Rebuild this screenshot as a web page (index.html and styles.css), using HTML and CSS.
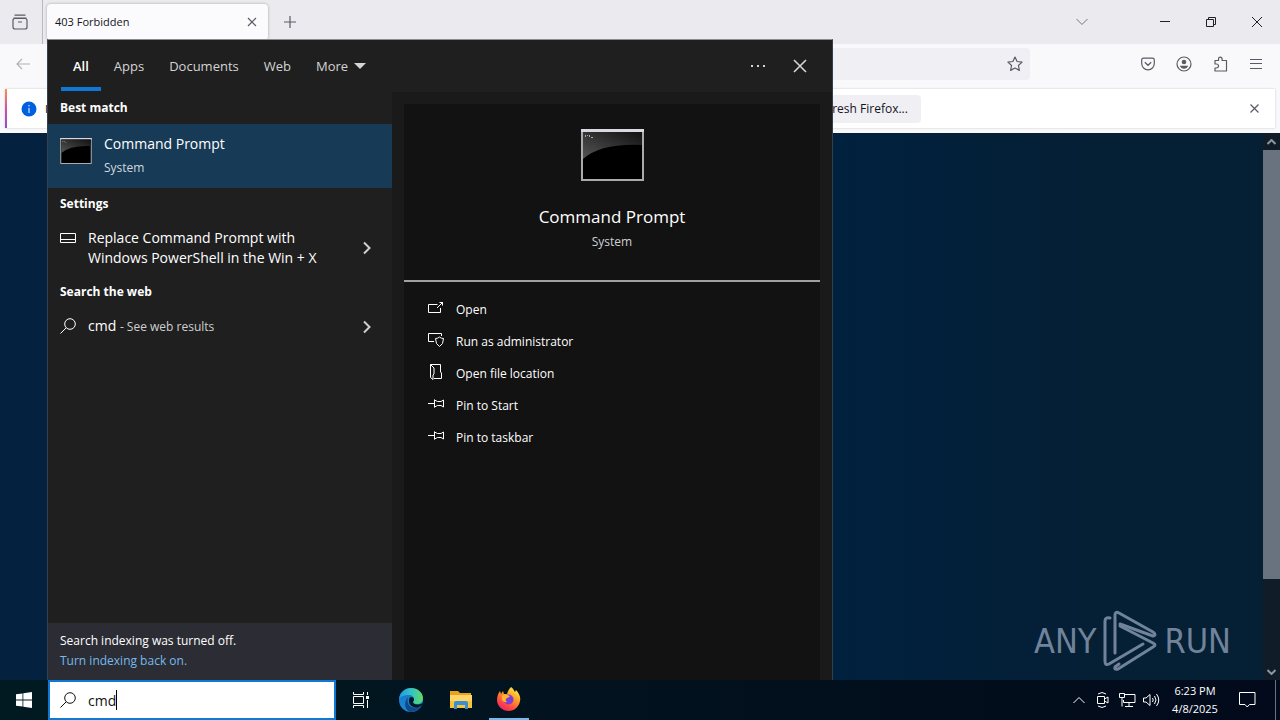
FILE: index.html
```html
<!DOCTYPE html>
<html lang="en">
<head>
    <meta charset="UTF-8">
    <meta name="viewport" content="width=device-width, initial-scale=1.0">
    <title>Desktop - Search</title>
    <link rel="stylesheet" href="styles.css">
</head>
<body>
    <main class="desktop">
        <!-- Browser window -->
        <section class="browser" aria-label="Firefox">
            <div class="tab-bar">
                <button class="icon-btn firefox-view" aria-label="Firefox View">
                    <svg width="18" height="18" viewBox="0 0 18 18"><path d="M3.5 2.2h11M2.5 5.2h13M2 7.5q0-2 2-2h10q2 0 2 2v6.500q0 2-2 2H4q-2 0-2-2zM7 9h4"/></svg>
                </button>
                <div class="browser-tab">
                    <span>403 Forbidden</span>
                    <button class="icon-btn tab-close" aria-label="Close tab">
                        <svg width="10" height="10" viewBox="0 0 10 10"><path d="M1 1l8 8M9 1l-8 8"/></svg>
                    </button>
                </div>
                <button class="icon-btn new-tab" aria-label="New tab">
                    <svg width="12" height="12" viewBox="0 0 12 12"><path d="M6 0v12M0 6h12"/></svg>
                </button>
                <div class="window-controls">
                    <button class="icon-btn list-tabs" aria-label="List all tabs">
                        <svg width="12" height="8" viewBox="0 0 12 8"><path d="M.5 1L6 6.500 11.500 1"/></svg>
                    </button>
                    <button class="icon-btn" aria-label="Minimize">
                        <svg width="10" height="10" viewBox="0 0 10 10"><path d="M0 4.500h10"/></svg>
                    </button>
                    <button class="icon-btn" aria-label="Restore">
                        <svg width="10" height="10" viewBox="0 0 10 10"><path d="M.5 2.500h7v7h-7zM2.500 2.500v-2h7v7h-2"/></svg>
                    </button>
                    <button class="icon-btn" aria-label="Close">
                        <svg width="10" height="10" viewBox="0 0 10 10"><path d="M0 0l10 10M10 0L0 10"/></svg>
                    </button>
                </div>
            </div>

            <div class="nav-bar">
                <button class="icon-btn back" aria-label="Back">
                    <svg width="14" height="12" viewBox="0 0 14 12"><path d="M14 6H1M6 1L1 6l5 5"/></svg>
                </button>
                <div class="url-bar">
                    <button class="icon-btn" aria-label="Bookmark this page">
                        <svg width="16" height="16" viewBox="0 0 16 16"><path stroke-linejoin="round" d="M8 1l2.100 4.500 5 .6-3.700 3.400 1 4.900L8 12l-4.400 2.400 1-4.900L.9 6.100l5-.6z"/></svg>
                    </button>
                </div>
                <div class="nav-tools">
                    <button class="icon-btn" aria-label="Save to Pocket">
                        <svg width="14" height="14" viewBox="0 0 14 14"><path d="M.7 3q0-1.800 1.800-1.800h9q1.800 0 1.800 1.800v3.500a6.300 6.300 0 0 1-12.600 0zM3.800 5.200L7 8.300l3.200-3.100"/></svg>
                    </button>
                    <button class="icon-btn" aria-label="Account">
                        <svg width="16" height="16" viewBox="0 0 16 16"><circle cx="8" cy="8" r="7"/><circle class="fill" cx="8" cy="6" r="2.300"/><path class="fill" d="M3.800 9.800h8.400Q11 12.800 8 12.800T3.800 9.800z"/></svg>
                    </button>
                    <button class="icon-btn" aria-label="Extensions">
                        <svg width="16" height="16" viewBox="0 0 16 16"><path stroke-linejoin="round" d="M3 8V4.500h3.500V3a1.800 1.800 0 0 1 3.600 0v1.500h4.400v10.500H3v-3h1.500a2 2 0 0 0 0-4z"/></svg>
                    </button>
                    <button class="icon-btn" aria-label="Open application menu">
                        <svg width="12" height="12" viewBox="0 0 12 12"><path d="M0 1.500h12M0 5.500h12M0 10.500h12"/></svg>
                    </button>
                </div>
            </div>

            <div class="notification">
                <svg class="info-icon" width="16" height="16" viewBox="0 0 16 16"><circle cx="8" cy="8" r="7.500"/><path d="M8 7v5M8 4v1.500"/></svg>
                <span class="notification-text">It</span>
                <button class="refresh-btn">Refresh Firefox...</button>
                <button class="icon-btn notification-close" aria-label="Dismiss">
                    <svg width="9" height="9" viewBox="0 0 9 9"><path d="M.5.5l8 8M8.500.5l-8 8"/></svg>
                </button>
            </div>

            <div class="page">
                <div class="watermark">
                    <span>ANY</span>
                    <svg width="54" height="62" viewBox="0 0 54 62">
                        <path d="M7 8Q2 7 2 11v40q0 5 4 3l34-20"/>
                        <path d="M12 43V5q0-4 4-2l34 19q4 3 0 4L17 14"/>
                        <path d="M17 16l33 17q4 2 0 4L15 59q-4 1-3-2l4-3"/>
                    </svg>
                    <span>RUN</span>
                </div>
                <div class="scrollbar">
                    <svg width="9" height="6" viewBox="0 0 9 6"><path d="M.5 5l4-4 4 4"/></svg>
                    <div class="scroll-thumb"></div>
                    <svg width="9" height="6" viewBox="0 0 9 6"><path d="M.5 1l4 4 4-4"/></svg>
                </div>
            </div>
        </section>

        <!-- Search flyout -->
        <section class="search-panel" aria-label="Search">
            <header class="search-header">
                <nav class="scopes">
                    <button class="scope active">All</button>
                    <button class="scope">Apps</button>
                    <button class="scope">Documents</button>
                    <button class="scope">Web</button>
                    <button class="scope">More
                        <svg width="12" height="6" viewBox="0 0 12 6"><path d="M0 0h12L6 6z"/></svg>
                    </button>
                </nav>
                <button class="header-btn" aria-label="Options">
                    <svg width="16" height="4" viewBox="0 0 16 4"><path class="dots" d="M1 1h2v2H1zM7 1h2v2H7zM13 1h2v2h-2z"/></svg>
                </button>
                <button class="header-btn" aria-label="Close search">
                    <svg width="14" height="14" viewBox="0 0 14 14"><path d="M1 1l12 12M13 1L1 13"/></svg>
                </button>
            </header>

            <div class="search-body">
                <div class="results">
                    <h2>Best match</h2>
                    <button class="best-match">
                        <svg class="cmd-icon" width="32" height="26" viewBox="0 0 63 52"><use href="#cmd"/></svg>
                        <span>
                            <span class="result-title">Command Prompt</span>
                            <span class="result-type">System</span>
                        </span>
                    </button>

                    <h2>Settings</h2>
                    <button class="result">
                        <svg width="16" height="16" viewBox="0 0 16 16"><path d="M.5 3.500h15v9H.5zM.5 9.500h15"/></svg>
                        <span class="result-title">Replace Command Prompt with Windows PowerShell in the Win + X</span>
                        <svg class="chevron" width="10" height="14" viewBox="0 0 10 14"><path d="M2 1.500L7.500 7 2 12.500"/></svg>
                    </button>

                    <h2>Search the web</h2>
                    <button class="result">
                        <svg width="16" height="16" viewBox="0 0 16 16"><circle cx="10" cy="6" r="5.300"/><path d="M6.200 9.800L.5 15.500"/></svg>
                        <span class="result-title">cmd <small>- See web results</small></span>
                        <svg class="chevron" width="10" height="14" viewBox="0 0 10 14"><path d="M2 1.500L7.500 7 2 12.500"/></svg>
                    </button>

                    <div class="indexing">
                        <div>Search indexing was turned off.</div>
                        <a href="#">Turn indexing back on.</a>
                    </div>
                </div>

                <div class="preview">
                    <div class="preview-card">
                        <div class="preview-top">
                            <svg class="cmd-icon" width="63" height="52" viewBox="0 0 63 52">
                                <defs>
                                    <linearGradient id="shine" x1="0" y1="1" x2="1" y2="0">
                                        <stop offset="0" stop-color="#555"/>
                                        <stop offset="1" stop-color="#111"/>
                                    </linearGradient>
                                </defs>
                                <g id="cmd">
                                    <path fill="#aaa" d="M0 0h63v52H0z"/>
                                    <path fill="#dcd8e2" d="M0 0h63v3H0z"/>
                                    <path fill="#000" d="M2 3h59v47H2z"/>
                                    <path fill="url(#shine)" d="M2 3h59v13Q20 14 2 30z"/>
                                    <path fill="#aaa" d="M4 6h1v2H4zM6 6h1v1H6zM8 6h1v2H8zM10 8h2v1h-2z"/>
                                </g>
                            </svg>
                            <h1>Command Prompt</h1>
                            <p>System</p>
                        </div>
                        <div class="actions">
                            <button><svg width="16" height="16" viewBox="0 0 16 16"><path d="M9.500 4.500h-9v8h12V8M9 8l6-6M11.500 2.500h3v3"/></svg>Open</button>
                            <button><svg width="16" height="16" viewBox="0 0 16 16"><path d="M6 9.500H.5v-8h13V4M7.500 6.500q2.500 0 4-1.500 1.500 1.500 4 1.500 0 6-4 8-4-2-4-8z"/></svg>Run as administrator</button>
                            <button><svg width="16" height="16" viewBox="0 0 16 16"><path d="M2.500.5h10V8l1 1v5.500H6M2.500.5v13L5 15.500V11l1-1V4L2.500.5"/></svg>Open file location</button>
                            <button><svg width="16" height="16" viewBox="0 0 16 16"><path d="M0 7.500h6.500M6.500 3.500v8M6.500 4l3 1.500h3.500l2.500-1.500v7L13 9.500H9.500l-3 1.500"/></svg>Pin to Start</button>
                            <button><svg width="16" height="16" viewBox="0 0 16 16"><path d="M0 7.500h6.500M6.500 3.500v8M6.500 4l3 1.500h3.500l2.500-1.500v7L13 9.500H9.500l-3 1.500"/></svg>Pin to taskbar</button>
                        </div>
                    </div>
                </div>
            </div>
        </section>
    </main>

    <footer class="taskbar">
        <button class="task-btn start" aria-label="Start">
            <svg width="16" height="16" viewBox="0 0 16 16"><path fill="#fff" d="M0 2.300L6.500 1.400v6.200H0zM7.300 1.300L16 0v7.600H7.300zM0 8.400h6.500v6.200L0 13.700zM7.300 8.400H16V16l-8.700-1.300z"/></svg>
        </button>
        <label class="search-box">
            <svg width="16" height="16" viewBox="0 0 16 16"><circle cx="10" cy="6" r="5.300"/><path d="M6.200 9.800L.5 15.500"/></svg>
            <input type="text" value="cmd" aria-label="Type here to search">
            <span class="caret"></span>
        </label>
        <button class="task-btn" aria-label="Task View">
            <svg width="17" height="16" viewBox="0 0 17 16"><path stroke="#fff" fill="none" d="M.5 0v2.500h10V0M.5 16v-2.500h10V16M.5 4.500h10v7H.5zM14.500 0v3M14.500 8v8"/><path fill="#fff" d="M13 4h3v3h-3z"/></svg>
        </button>
        <button class="task-btn" aria-label="Microsoft Edge">
            <svg width="24" height="24" viewBox="0 0 24 24">
                <defs>
                    <linearGradient id="edge-top" x1="0" x2="1"><stop offset="0" stop-color="#1c9de0"/><stop offset=".5" stop-color="#35c1c5"/><stop offset="1" stop-color="#5fdc62"/></linearGradient>
                    <linearGradient id="edge-low" x1="0" y1="0" x2="0" y2="1"><stop offset="0" stop-color="#1672c4"/><stop offset="1" stop-color="#1b8bd8"/></linearGradient>
                </defs>
                <circle cx="12" cy="12" r="12" fill="url(#edge-low)"/>
                <path fill="url(#edge-top)" d="M0 11C1 4 6 0 12 0c7 0 12 5 12 10 0 4-3 6-6 6-3 0-4-1-4-2 0-1 1-1 1-3 0-2-2-4-5-4-5 0-9 2-10 4z"/>
                <path fill="#114a8b" d="M9 9c-2 8 3 13 13 9-3 5-8 6-11 6-5-2-7-9-2-15z"/>
                <path fill="#011922" d="M12 9c2 0 3 1 3 3 0 1-1 1-1 2 0 2 4 4 10 1v1l-2 2c-5 3-11 1-12-4 0-3 0-4 2-5z"/>
            </svg>
        </button>
        <button class="task-btn" aria-label="File Explorer">
            <svg width="22" height="20" viewBox="0 0 22 20">
                <path fill="#e8a21e" d="M0 1h8l2 2h11v5H0z"/>
                <path fill="#ffd567" d="M0 5h22v13H0z"/>
                <path fill="#f7c23c" d="M0 11h22v7H0z"/>
                <path fill="#3b8fd0" d="M4 19v-6q0-2 2-2h10q2 0 2 2v6h-3v-4H7v4z"/>
            </svg>
        </button>
        <button class="task-btn running" aria-label="Firefox">
            <svg width="24" height="24" viewBox="0 0 24 24">
                <defs>
                    <linearGradient id="fox" x1=".8" y1="0" x2=".2" y2="1"><stop offset="0" stop-color="#fff04a"/><stop offset=".4" stop-color="#ff9a25"/><stop offset=".75" stop-color="#ff4344"/><stop offset="1" stop-color="#e02078"/></linearGradient>
                </defs>
                <path fill="url(#fox)" d="M14 0c3 2 3 4 4 5l1-2c3 3 5 7 4 11-1 6-6 10-11 10C5 24 0 19 0 13c0-4 1-6 3-9l1 3 2-3 1 3h3c1-3 2-5 4-7z"/>
                <circle cx="11.500" cy="12.500" r="5" fill="#7b3fd6"/>
                <path fill="#ffb52c" d="M5 9c3-3 5-1 8 0-1 2-3 1-4 3-1 1 0 2 1 3-3 1-6-2-5-6z"/>
            </svg>
        </button>

        <div class="tray">
            <button class="tray-btn" aria-label="Show hidden icons"><svg width="12" height="8" viewBox="0 0 12 8"><path d="M.5 7L6 1.500 11.500 7"/></svg></button>
            <button class="tray-btn" aria-label="Meet Now"><svg width="14" height="16" viewBox="0 0 14 16"><path d="M1.500 4.500h7v7h-7zM8.500 7l3.500-2v6L8.500 9M2 2q4-3 8 0M2 14q4 3 8 0"/></svg></button>
            <button class="tray-btn" aria-label="Network"><svg width="17" height="14" viewBox="0 0 17 14"><path d="M5.500 1.500h10.500v8H4.500V7M.5.5h5v4h-5zM3 4.500v9M10 9.500v4M6 13.500h8"/></svg></button>
            <button class="tray-btn" aria-label="Volume"><svg width="17" height="14" viewBox="0 0 17 14"><path d="M.5 5h2.500l4-3.500v11L3 9H.5zM9.500 5q1.500 2 0 4M11.500 3q3 4 0 8M13.500 1q4.500 6 0 12"/></svg></button>
            <div class="clock">
                <time>6:23 PM</time>
                <time>4/8/2025</time>
            </div>
            <button class="tray-btn action-center" aria-label="Notifications"><svg width="17" height="16" viewBox="0 0 17 16"><path d="M.5.5h15.500v12h-5.500L8.200 15 6 12.500H.5z"/></svg></button>
            <button class="show-desktop" aria-label="Show desktop"></button>
        </div>
    </footer>
</body>
</html>
```
FILE: styles.css
```css
* {
    box-sizing: border-box;
}
body {
    display: flex;
    flex-direction: column;
    min-height: 100vh;
    margin: 0;
    font-family: "Open Sans", "Noto Sans", sans-serif;
    font-size: 12px;
    line-height: 20px;
}
button {
    padding: 0;
    border: none;
    background: none;
    color: inherit;
    font: inherit;
    text-align: left;
}
h1, h2, p {
    margin: 0;
}
svg {
    flex: none;
    fill: none;
    stroke: currentColor;
}
.desktop {
    position: relative;
    display: flex;
    flex: 1;
}

/* Browser */
.browser {
    display: flex;
    flex: 1;
    flex-direction: column;
    background: #f9f9fb;
    color: #15141a;
    font-size: 11px;
}
.icon-btn {
    display: flex;
    align-items: center;
    justify-content: center;
    color: #5b5b66;
}
.icon-btn svg {
    stroke-width: 1.2;
}
.icon-btn .fill {
    fill: currentColor;
    stroke: none;
}
.tab-bar {
    display: flex;
    height: 44px;
    background: #eaeaef;
}
.firefox-view {
    width: 43px;
    padding-right: 3px;
    border-right: 1px solid #b8b8c0;
}
.browser-tab {
    display: flex;
    align-items: center;
    justify-content: space-between;
    width: 221px;
    height: 36px;
    margin: 4px 0 0 4px;
    padding: 0 8px;
    border-radius: 4px;
    background: #fbfbfe;
    box-shadow: 0 0 3px rgba(0, 0, 0, 0.3);
}
.tab-close {
    width: 16px;
    height: 16px;
}
.new-tab {
    width: 43px;
}
.window-controls {
    display: flex;
    margin-left: auto;
}
.window-controls .icon-btn {
    width: 46px;
    color: #222;
}
.window-controls .icon-btn svg {
    stroke-width: 1;
}
.window-controls .list-tabs {
    margin-right: 37px;
    color: #77777f;
}
.nav-bar {
    display: flex;
    align-items: center;
    height: 40px;
    padding: 0 16px;
}
.back {
    color: #b2b2b8;
}
.url-bar {
    display: flex;
    flex: 1;
    justify-content: flex-end;
    height: 32px;
    margin: 0 110px 0 216px;
    padding: 0 7px;
    border-radius: 4px;
    background: #f0f0f4;
}
.nav-tools {
    display: flex;
    gap: 20px;
}
.nav-tools .icon-btn {
    width: 16px;
}
.notification {
    display: flex;
    align-items: center;
    height: 39px;
    margin: 5px;
    padding: 0 16px 0 14px;
    border-left: 2px solid;
    border-image: linear-gradient(#ff9640, #d44fa0, #8a4fd0) 1;
    border-width: 0 0 0 2px;
    background: #fff;
    box-shadow: 0 0 2px rgba(0, 0, 0, 0.2);
}
.info-icon {
    stroke: #fff;
}
.info-icon circle {
    fill: #0061e0;
    stroke: none;
}
.notification-text {
    flex: 0 1 764px;
    padding-left: 8px;
}
.refresh-btn {
    height: 28px;
    padding: 0 13px;
    border-radius: 4px;
    background: #f0f0f4;
    font-size: 12px;
}
.notification-close {
    margin-left: auto;
}
.page {
    display: flex;
    flex: 1;
    align-items: flex-end;
    justify-content: flex-end;
    background: linear-gradient(90deg, #04223f, #00213f 65%, #051f35 85%);
}
.watermark {
    display: flex;
    align-items: center;
    gap: 7px;
    margin: 0 32px 8px 0;
    color: #71839a;
    font-family: "Liberation Sans Narrow", "DejaVu Sans Condensed", sans-serif;
    font-size: 34px;
    line-height: 62px;
}
.watermark svg {
    stroke-width: 3;
    stroke-linecap: round;
    stroke-linejoin: round;
}
.scrollbar {
    display: flex;
    flex-direction: column;
    align-items: center;
    align-self: stretch;
    width: 17px;
    padding: 6px 0 5px;
    background: #101c28;
    color: #8a96a2;
}
.scrollbar svg {
    stroke-width: 2;
}
.scroll-thumb {
    width: 100%;
    height: 80%;
    margin: 5px 0 auto;
    background: #69737f;
}

/* Search flyout */
.search-panel {
    position: absolute;
    top: 39px;
    bottom: 0;
    left: 47px;
    display: flex;
    flex-direction: column;
    width: 786px;
    border: 1px solid #34404c;
    border-top-color: #8b8b8f;
    border-bottom: none;
    background: #1f1f1f;
    color: #fff;
}
.search-header {
    display: flex;
    height: 52px;
    padding: 0 11px 0 13px;
    color: #d4d4d4;
}
.scopes {
    display: flex;
    flex: 1;
    gap: 1px;
    font-size: 13px;
}
.scope {
    display: flex;
    align-items: center;
    gap: 6px;
    height: 51px;
    padding: 0 12px;
}
.scope.active {
    box-shadow: inset 0 -4px #0f78d4;
    color: #fff;
    font-weight: 600;
}
.scope svg {
    fill: currentColor;
    stroke: none;
}
.header-btn {
    display: flex;
    align-items: center;
    justify-content: center;
    width: 42px;
    height: 51px;
}
.header-btn svg {
    stroke-width: 1.6;
}
.header-btn .dots {
    fill: currentColor;
    stroke: none;
}
.search-body {
    display: flex;
    flex: 1;
}
.results {
    display: flex;
    flex-direction: column;
    width: 344px;
}
.results h2 {
    padding: 6px 12px;
    font-size: 12px;
    font-weight: 700;
    line-height: 20px;
}
.best-match {
    display: flex;
    gap: 12px;
    height: 64px;
    padding: 10px 12px;
    background: #173a56;
}
.cmd-icon {
    stroke: none;
}
.best-match .cmd-icon {
    margin-top: 4px;
}
.result-title {
    display: block;
    font-size: 14px;
    line-height: 20px;
}
.result-type {
    display: block;
    padding-top: 4px;
    color: #d0d8df;
}
.result {
    display: flex;
    gap: 12px;
    padding: 8px 20px 8px 12px;
}
.result svg {
    margin-top: 2px;
}
.result .result-title {
    flex: 1;
}
.result small {
    color: #cfcfcf;
    font-size: 12px;
}
.result .chevron {
    align-self: center;
    margin: 0;
    color: #d0d0d0;
    stroke-width: 2;
}
.indexing {
    margin-top: auto;
    padding: 8px 12px 9px;
    background: #2c2d34;
}
.indexing a {
    color: #76b9ed;
    text-decoration: none;
}
.preview {
    display: flex;
    flex: 1;
    padding: 12px 12px 0;
    background: #1a1a1a;
}
.preview-card {
    flex: 1;
    background: #121212;
}
.preview-top {
    display: flex;
    flex-direction: column;
    align-items: center;
    padding: 25px 0 28px;
    border-bottom: 2px solid #a0a0a0;
}
.preview h1 {
    padding: 24px 0 3px;
    font-size: 17px;
    font-weight: 400;
    line-height: 24px;
}
.preview p {
    color: #d0d0d0;
}
.actions {
    display: flex;
    flex-direction: column;
    padding: 12px 24px;
}
.actions button {
    display: flex;
    gap: 12px;
    height: 32px;
    padding: 6px 0;
}

/* Taskbar */
.taskbar {
    display: flex;
    height: 40px;
    background: linear-gradient(90deg, #011a22, #02101d 60%, #020a1b);
    color: #fff;
}
.task-btn {
    display: flex;
    align-items: center;
    justify-content: center;
    width: 50px;
}
.task-btn svg {
    stroke: none;
}
.start {
    width: 48px;
}
.search-box {
    display: flex;
    align-items: center;
    width: 288px;
    padding: 0 10px;
    border: 2px solid #0f78d4;
    background: #fff;
    color: #111;
}
.search-box input {
    field-sizing: content;
    margin-left: 12px;
    padding: 0;
    border: none;
    outline: none;
    background: none;
    color: #111;
    font-family: inherit;
    font-size: 14px;
}
.caret {
    width: 1px;
    height: 20px;
    background: #000;
}
.running {
    width: 40px;
    margin-left: 3px;
    border-bottom: 2px solid #76b9ed;
}
.tray {
    display: flex;
    margin-left: auto;
}
.tray-btn {
    display: flex;
    align-items: center;
    justify-content: center;
    width: 24px;
}
.clock {
    display: flex;
    flex-direction: column;
    justify-content: center;
    width: 64px;
    font-size: 11px;
    line-height: 18px;
    text-align: center;
}
.action-center {
    width: 40px;
}
.show-desktop {
    width: 5px;
    margin-left: 8px;
    border-left: 1px solid #6a7180;
}
```
